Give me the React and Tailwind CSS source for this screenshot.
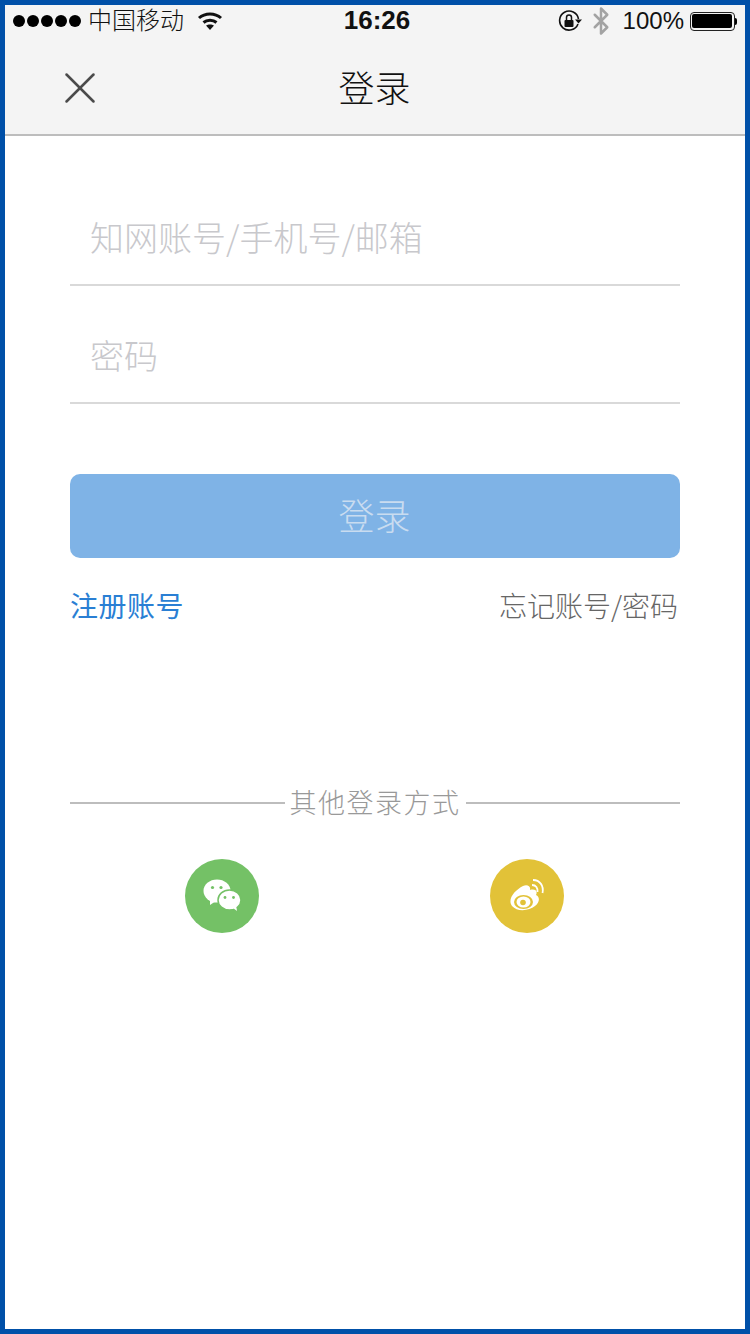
import { X, Bluetooth } from 'lucide-react';

const cjk = "font-['Liberation_Sans','Noto_Sans_CJK_SC',sans-serif]";

const WifiIcon = () => (
  <svg width="26" height="20" viewBox="0 0 26 20" fill="none" stroke="#111" strokeWidth="3">
    <path d="M2 7 C8 1.5 18 1.5 24 7" />
    <path d="M6.5 11.5 C10 8.5 16 8.5 19.5 11.5" />
    <path d="M13 19 L9 14.5 C11 13 15 13 17 14.5 Z" fill="#111" stroke="none" />
  </svg>
);

const LockIcon = () => (
  <svg width="24" height="24" viewBox="0 0 24 24" fill="none">
    <path d="M20 15 A9.5 9.5 0 1 1 20.5 10" stroke="#111" strokeWidth="1.6" />
    <path d="M17 10.5 H24 L20.5 14.5 Z" fill="#111" />
    <rect x="6.5" y="11" width="9" height="7" rx="1" fill="#111" />
    <path d="M8.5 11 V8.500 a2.500 2.500 0 0 1 5 0 V11" stroke="#111" strokeWidth="1.500" />
  </svg>
);

const Battery = () => (
  <div className="flex items-center">
    <div className="w-[45px] h-[19px] rounded-[4px] border border-[#222] p-[1.5px]">
      <div className="w-full h-full rounded-[2px] bg-black" />
    </div>
    <div className="w-[2px] h-[7px] bg-black rounded-r-sm" />
  </div>
);

const WechatIcon = () => (
  <svg width="40" height="34" viewBox="0 0 40 34">
    <ellipse cx="15" cy="12" rx="13.500" ry="11.500" fill="#fff" />
    <path d="M8 20 L8 26 L14 22 Z" fill="#fff" />
    <ellipse cx="27.500" cy="21" rx="11.500" ry="10" fill="#fff" stroke="#74c166" strokeWidth="1.500" />
    <path d="M31 29 L35 32 L34 26 Z" fill="#fff" />
    <circle cx="10.500" cy="8.500" r="1.600" fill="#74c166" />
    <circle cx="19" cy="8.500" r="1.600" fill="#74c166" />
    <circle cx="23" cy="18.500" r="1.400" fill="#74c166" />
    <circle cx="31.500" cy="18.500" r="1.400" fill="#74c166" />
  </svg>
);

const WeiboIcon = () => (
  <svg width="36" height="34" viewBox="0 0 36 34">
    <path d="M14 7 C18 5 22 7 21 11 C26 9.500 29 12 27 16 C31 18 31 23 26 27 C20 32 8 33 3 27 C-2 20 6 11 14 7 Z" fill="#fff" />
    <ellipse cx="14.500" cy="23" rx="9.500" ry="7" fill="#e2c238" />
    <ellipse cx="14.500" cy="23" rx="7" ry="5.500" fill="#fff" />
    <circle cx="14" cy="23.500" r="2.800" fill="#e2c238" />
    <path d="M23 6 C27 6 29 9 28.500 13" fill="none" stroke="#fff" strokeWidth="1.800" />
    <path d="M24 1 C31 1 35 7 33.500 14" fill="none" stroke="#fff" strokeWidth="1.800" />
  </svg>
);

const Field = ({ label }) => (
  <div className="h-[118px] flex items-end border-b-2 border-[#d9d9d9]">
    <div className="pl-[20px] pb-[23px] text-[34px] leading-[48px] font-light font-['Noto_Sans_CJK_SC',sans-serif] text-[#c8c8cc]">{label}</div>
  </div>
);

export default function App() {
  return (
    <div className={`${cjk} w-[750px] h-[1334px] border-[5px] border-[#0050a8] bg-white flex flex-col`}>
      <header className="h-[131px] shrink-0 bg-[#f4f4f4] border-b-2 border-[#bdbdbd] flex flex-col">
        <div className="h-[31px] pl-[8px] pr-[8px] grid grid-cols-3 items-center text-[#111]">
          <div className="flex items-center">
            <div className="flex gap-[2px]">
              <span className="w-[12px] h-[12px] rounded-full bg-black" />
              <span className="w-[12px] h-[12px] rounded-full bg-black" />
              <span className="w-[12px] h-[12px] rounded-full bg-black" />
              <span className="w-[12px] h-[12px] rounded-full bg-black" />
              <span className="w-[12px] h-[12px] rounded-full bg-black" />
            </div>
            <span className="ml-[7px] text-[24px] leading-[30px] font-light whitespace-nowrap">中国移动</span>
            <span className="ml-[13px] flex"><WifiIcon /></span>
          </div>
          <div className="pl-[4px] pb-[2px] text-center text-[26px] leading-[30px] font-bold">16:26</div>
          <div className="flex items-center justify-end">
            <LockIcon />
            <Bluetooth size={30} strokeWidth={2} className="ml-[4px] text-[#a3a3a3]" />
            <span className="ml-[7px] text-[24px] leading-[30px]">100%</span>
            <span className="ml-[6px] flex"><Battery /></span>
          </div>
        </div>
        <div className="relative flex-1 pt-[10px] flex items-center justify-center">
          <X size={54} strokeWidth={1.1} className="absolute left-[48px] top-[25px] text-[#4a4a4a]" />
          <h1 className="pr-[1px] text-[36px] leading-[50px] font-light text-[#111]">登录</h1>
        </div>
      </header>

      <main className="flex-1 px-[65px] pt-[32px]">
        <Field label="知网账号/手机号/邮箱" />
        <Field label="密码" />

        <button className="mt-[70px] pt-[3px] pr-[1px] w-full h-[84px] rounded-[10px] bg-[#7fb3e6] text-[36px] font-light text-[#c9dcf0]">登录</button>

        <div className="mt-[27px] flex justify-between items-center leading-[40px] font-['Noto_Sans_CJK_SC',sans-serif]">
          <span className="text-[28px] tracking-[0.5px] text-[#2a7fd4]">注册账号</span>
          <span className="text-[28px] font-light text-[#666] pr-[2px]">忘记账号/密码</span>
        </div>

        <div className="mt-[159px] flex items-center gap-[5px]">
          <div className="flex-1 h-[2px] bg-[#bdbdbd]" />
          <span className="pt-[2px] text-[27px] leading-[36px] tracking-[1.500px] font-light text-[#999]">其他登录方式</span>
          <div className="flex-1 h-[2px] bg-[#bdbdbd]" />
        </div>

        <div className="mt-[37px] pr-[1px] flex justify-center gap-[231px]">
          <div className="w-[74px] h-[74px] rounded-full bg-[#74c166] flex items-center justify-center"><WechatIcon /></div>
          <div className="w-[74px] h-[74px] rounded-full bg-[#e2c238] flex items-center justify-center"><WeiboIcon /></div>
        </div>
      </main>
    </div>
  );
}
